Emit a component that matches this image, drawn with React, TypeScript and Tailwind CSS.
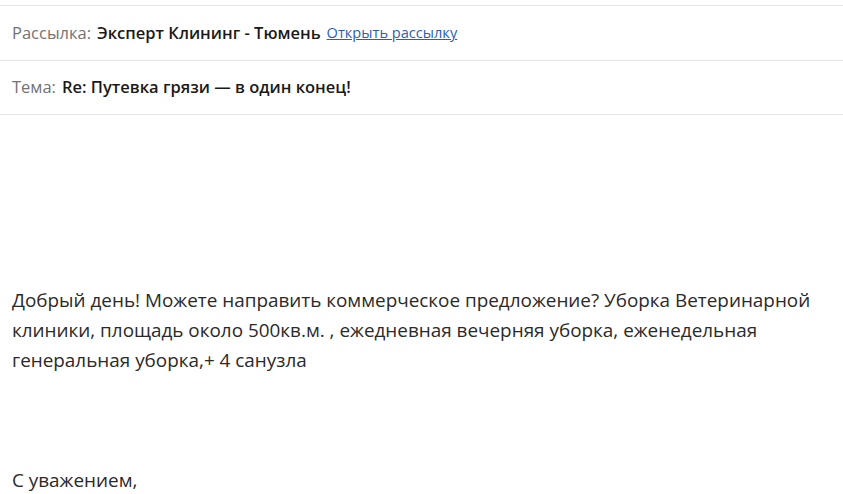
export default function App() {
  return (
    <div
      className="h-[494px] w-[843px] overflow-hidden bg-white text-[#1f1f1f]"
      style={{ fontFamily: '"Open Sans", "Noto Sans", sans-serif' }}
    >
      <div className="h-[5px]" />
      <div className="flex h-[55px] items-center gap-[6px] border-t border-[#e6e6e6] px-3 text-[16.5px]">
        <span className="text-[#737373]">Рассылка:</span>
        <span className="font-semibold text-[#1a1a1a]">Эксперт Клининг - Тюмень</span>
        <a href="#" className="text-[14.6px] text-[#2b5fb3] underline">
          Открыть рассылку
        </a>
      </div>
      <div className="flex h-[55px] items-center gap-[6px] border-y border-[#e6e6e6] px-3 text-[16.5px]">
        <span className="text-[#737373]">Тема:</span>
        <span className="font-semibold text-[#1a1a1a]">Re: Путевка грязи — в один конец!</span>
      </div>
      <div className="px-3 pt-[170px] text-[18.9px] leading-[30px] text-[#2a2a2a]">
        <p>
          Добрый день! Можете направить коммерческое предложение? Уборка Ветеринарной клиники, площадь около
          500кв.м. , ежедневная вечерняя уборка, еженедельная генеральная уборка,+ 4 санузла
        </p>
        <p className="mt-[90px]">С уважением,</p>
      </div>
    </div>
  );
}
